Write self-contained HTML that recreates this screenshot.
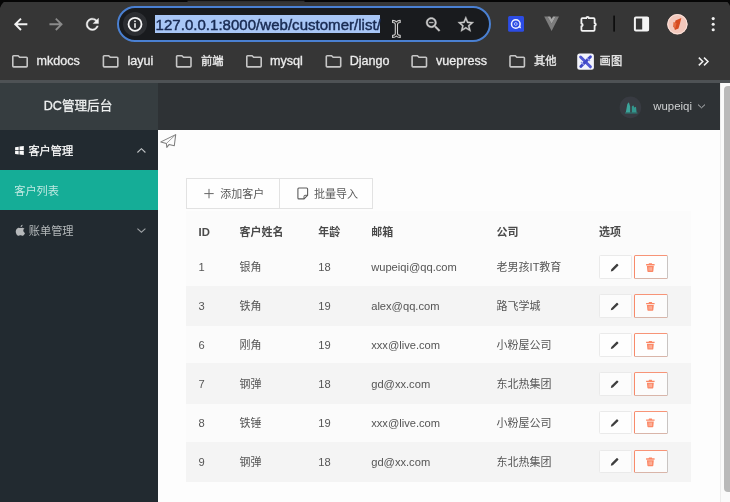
<!DOCTYPE html>
<html lang="zh">
<head>
<meta charset="utf-8">
<title>客户列表</title>
<style>
*{box-sizing:border-box;margin:0;padding:0}
html,body{width:730px;height:502px;overflow:hidden;background:#fdfdfd;}
body{font-family:"Liberation Sans","Noto Sans CJK SC",sans-serif;position:relative;color:#555}
#wrap{position:absolute;left:0;top:0;width:730px;height:502px;will-change:transform}
svg{position:absolute;overflow:visible}
/* browser chrome */
#chrome{position:absolute;left:0;top:0;width:730px;height:82px;background:#363636;z-index:2}
#topstrip{position:absolute;left:0;top:0;width:730px;height:2px;background:#060606}
#omni{position:absolute;left:117px;top:6.300px;width:373.5px;height:36px;border-radius:18px;background:#191b1e;border:2px solid #4a80d2;}
#infobg{position:absolute;left:123px;top:12.3px;width:24px;height:24px;border-radius:50%;background:radial-gradient(circle,#26282b 0,#2d2f33 70%,#27292c 100%)}
#urlsel{position:absolute;left:155px;top:15.3px;width:225.3px;height:18px;background:#a8c6f6;}
#url{position:absolute;left:155.6px;top:14px;font-size:15px;line-height:21px;color:#182a52;letter-spacing:0.03px;white-space:nowrap;-webkit-text-stroke:0.45px #182a52}
.bm{position:absolute;top:52.5px;font-size:12.6px;line-height:17px;color:#ececec;white-space:nowrap;-webkit-text-stroke:0.3px #ececec}
.bm.cj{font-size:11.3px;top:52.5px}
.fd{left:0;top:0}
#chromeline{position:absolute;left:0;top:80.3px;width:730px;height:2.3px;background:#4e5255}
/* page */
#logo{position:absolute;left:0;top:82px;width:158px;height:48px;background:#363d40;color:#eef0f0;font-size:12.6px;line-height:48px;text-align:center;white-space:nowrap;-webkit-text-stroke:0.3px #eef0f0}
#logo span{position:absolute;left:43.7px;top:0.4px}
#header{position:absolute;left:158px;top:82px;width:562.4px;height:48px;background:#2e3235;}
#side{position:absolute;left:0;top:130px;width:158px;height:372px;background:#222a30;}
.nav{position:absolute;left:0;width:158px;height:40px;line-height:40px;font-size:11.2px;color:#b4b8ba;white-space:nowrap}
.nav span{position:absolute;top:0.5px}
#content{position:absolute;left:158px;top:130px;width:562.4px;height:372px;background:#fdfdfd}
#tablebg{position:absolute;left:186px;top:211px;width:505.4px;height:271px;background:#fbfbfb}
#scroll{position:absolute;left:720.4px;top:82px;width:10px;height:420px;background:#fafafa;border-left:1px solid #ececec}
#thumb{position:absolute;left:724.3px;top:85.5px;width:10px;height:406px;border-radius:4px;background:#b9b9b9}
.btn{position:absolute;top:178.3px;height:30.6px;border:1px solid #e2e2e2;background:#fefefe;font-size:11px;line-height:29px;color:#5a5a5a;white-space:nowrap}
.btn span{position:absolute;top:0.4px}
.row{position:absolute;left:186px;width:505.4px;height:38.85px;}
.row span{position:absolute;top:0;line-height:39px;font-size:11px;color:#555;white-space:nowrap}
.row.h span{font-weight:bold;color:#4a4a4a}
.st{position:absolute;left:186px;width:505.4px;height:40.3px;background:#f4f4f4}
.c1{left:12.5px}.c2{left:53.6px}.c3{left:132.3px}.c4{left:185.2px}.c5{left:310.6px}.c6{left:413px}
.row .c4,.row .c3,.row .c1{font-size:11.15px}
.eb,.db{position:absolute;top:7px;height:23.8px;border:1px solid #eaeaea;border-radius:1.5px;background:rgba(255,255,255,.75)}
.eb{left:412.9px;width:33.1px}.db{left:447.8px;width:33.8px;border-color:#f79477 #c9c4c2 #d9b5a9 #f88a6a}
</style>
</head>
<body>
<div id="wrap">
<div id="chrome">
  <div id="topstrip"></div>
  <svg style="left:0;top:0" width="730" height="82" viewBox="0 0 730 82">
    <rect x="187.500" y="0.700" width="117" height="1.500" fill="#2f2f2f"/>
    <path d="M0 0H8Q2 1.5 0 8Z" fill="#060606"/>
    <path d="M730 0H724Q728.500 1.500 730 6Z" fill="#060606"/>
    <!-- back -->
    <path d="M26.400 24.300H15.600M20.300 19.300l-5 5l5 5" fill="none" stroke="#f3f3f3" stroke-width="1.900" stroke-linecap="square" stroke-linejoin="miter"/>
    <!-- forward -->
    <path d="M50.400 24.300H61.200M56.500 19.300l5 5l-5 5" fill="none" stroke="#8b8b8b" stroke-width="1.900" stroke-linecap="square" stroke-linejoin="miter"/>
    <!-- reload -->
    <g transform="translate(83.100 15.100) scale(0.770)" fill="#f3f3f3" stroke="#f3f3f3" stroke-width="0.500"><path d="M17.650 6.350C16.200 4.900 14.210 4 12 4c-4.420 0-7.990 3.580-7.990 8s3.570 8 7.990 8c3.730 0 6.840-2.550 7.730-6h-2.080c-.820 2.330-3.040 4-5.650 4-3.310 0-6-2.690-6-6s2.690-6 6-6c1.660 0 3.140.690 4.220 1.780L13 11h7V4l-2.350 2.350z"/></g>
  </svg>
  <div id="omni"></div>
  <div id="infobg"></div>
  <div id="urlsel"></div>
  <div id="url">127.0.0.1:8000/web/customer/list/</div>
  <svg style="left:0;top:0" width="730" height="82" viewBox="0 0 730 82">
    <!-- info -->
    <circle cx="135" cy="24.300" r="6.500" fill="none" stroke="#f4f4f4" stroke-width="1.800"/>
    <rect x="134.200" y="23.200" width="1.600" height="4.600" fill="#f4f4f4"/>
    <rect x="134.200" y="20.500" width="1.600" height="1.600" fill="#f4f4f4"/>
    <!-- I-beam -->
    <path d="M392.600 20.400q2.700 0 3.800 1.400q1.100-1.400 3.800-1.400v2.100q-2.700 0-2.700 1.900v9q0 1.900 2.700 1.900v2.100q-2.700 0-3.800-1.400q-1.100 1.400-3.800 1.400v-2.100q2.700 0 2.700-1.900v-9q0-1.900-2.700-1.900z" fill="#151515" stroke="#d0d0d0" stroke-width="1.100" stroke-linejoin="round"/>
    <!-- zoom -->
    <g transform="translate(423.700 15) scale(0.800)" fill="#cacaca" stroke="#cacaca" stroke-width="0.450"><path d="M15.500 14h-.790l-.280-.270C15.410 12.590 16 11.110 16 9.500 16 5.910 13.090 3 9.500 3S3 5.910 3 9.500 5.910 16 9.500 16c1.610 0 3.090-.590 4.230-1.570l.270.280v.790l5 4.990L20.490 19l-4.990-5zm-6 0C7.010 14 5 11.990 5 9.500S7.010 5 9.500 5 14 7.010 14 9.500 11.990 14 9.500 14zM7 9h5v1H7z"/></g>
    <!-- star -->
    <g transform="translate(456.200 14.800) scale(0.800)" fill="#cacaca" stroke="#cacaca" stroke-width="0.450"><path d="M22 9.240l-7.190-.620L12 2 9.190 8.630 2 9.240l5.460 4.730L5.820 21 12 17.270 18.180 21l-1.630-7.030L22 9.240zM12 15.400l-3.760 2.270 1-4.280-3.320-2.880 4.380-.380L12 6.100l1.710 4.040 4.380.380-3.320 2.880 1 4.280L12 15.400z"/></g>
    <!-- blue ext -->
    <rect x="508.100" y="16.100" width="15.900" height="15.600" rx="1.500" fill="#2c4ce4"/>
    <circle cx="515.800" cy="24" r="4.300" fill="none" stroke="#f0f3ff" stroke-width="1.500"/>
    <circle cx="515.800" cy="24" r="1.400" fill="none" stroke="#cfd8ff" stroke-width="0.800"/>
    <path d="M518 27l3.200 1.600l-1.200-3.400z" fill="#f0f3ff"/>
    <!-- vue -->
    <path d="M544.200 16.600h3.200l4.200 7.200l4.200-7.200h3.200l-7.400 14.500z" fill="#7d7d7d"/>
    <path d="M547.400 16.600h2.800l1.400 2.500l1.400-2.500h2.800l-4.200 7.200z" fill="#a4a4a4"/>
    <!-- puzzle -->
    <path d="M582.400 18.200H586.300a1.300 1.300 0 0 1 2.600 0H593.600q1 0 1 1V23.200a1.200 1.200 0 0 1 0 2.400V29.800q0 1-1 1H582.400q-1 0-1-1V26.200a1.300 1.300 0 0 0 0-2.600V19.200q0-1 1-1Z" fill="none" stroke="#f3f3f3" stroke-width="1.800" stroke-linejoin="round"/>
    <!-- separator -->
    <rect x="613.300" y="15.600" width="1.600" height="16" fill="#0a0a0a"/>
    <!-- side panel -->
    <rect x="634.900" y="17.600" width="13.200" height="12.800" rx="1" fill="none" stroke="#f4f4f4" stroke-width="2"/>
    <rect x="642.200" y="17.200" width="6.400" height="13.600" fill="#f4f4f4"/>
    <!-- avatar -->
    <circle cx="677.400" cy="24.200" r="10.200" fill="#f3c8bc"/>
    <circle cx="677.400" cy="24.200" r="9.600" fill="none" stroke="#f9e3dc" stroke-width="1"/>
    <path d="M675.500 20.500l5.800-2.500l-1.200 5l-1.600 5.500l-3.600 1.500l-1-3.500z" fill="#d64a1f"/>
    <path d="M673.500 22l3 1l-1 5l-2.500-1z" fill="#e4693f"/>
    <!-- kebab -->
    <circle cx="713.200" cy="18.600" r="1.550" fill="#f1f1f1"/>
    <circle cx="713.200" cy="24.200" r="1.550" fill="#f1f1f1"/>
    <circle cx="713.200" cy="29.800" r="1.550" fill="#f1f1f1"/>
    <!-- folders -->
    <g fill="#c6c6c6">
      <g transform="translate(10.400 51.700) scale(0.800)"><path d="M9.170 6l2 2H20v10H4V6h5.170M10 4H4c-1.100 0-1.990.900-1.990 2L2 18c0 1.100.900 2 2 2h16c1.100 0 2-.900 2-2V8c0-1.100-.900-2-2-2h-8l-2-2z"/></g>
      <g transform="translate(101 51.700) scale(0.800)"><path d="M9.170 6l2 2H20v10H4V6h5.170M10 4H4c-1.100 0-1.990.900-1.990 2L2 18c0 1.100.900 2 2 2h16c1.100 0 2-.900 2-2V8c0-1.100-.900-2-2-2h-8l-2-2z"/></g>
      <g transform="translate(174.200 51.700) scale(0.800)"><path d="M9.170 6l2 2H20v10H4V6h5.170M10 4H4c-1.100 0-1.990.900-1.990 2L2 18c0 1.100.900 2 2 2h16c1.100 0 2-.900 2-2V8c0-1.100-.900-2-2-2h-8l-2-2z"/></g>
      <g transform="translate(244.400 51.700) scale(0.800)"><path d="M9.170 6l2 2H20v10H4V6h5.170M10 4H4c-1.100 0-1.990.900-1.990 2L2 18c0 1.100.900 2 2 2h16c1.100 0 2-.900 2-2V8c0-1.100-.900-2-2-2h-8l-2-2z"/></g>
      <g transform="translate(323.900 51.700) scale(0.800)"><path d="M9.170 6l2 2H20v10H4V6h5.170M10 4H4c-1.100 0-1.990.900-1.990 2L2 18c0 1.100.900 2 2 2h16c1.100 0 2-.900 2-2V8c0-1.100-.900-2-2-2h-8l-2-2z"/></g>
      <g transform="translate(409.700 51.700) scale(0.800)"><path d="M9.170 6l2 2H20v10H4V6h5.170M10 4H4c-1.100 0-1.990.900-1.990 2L2 18c0 1.100.900 2 2 2h16c1.100 0 2-.900 2-2V8c0-1.100-.900-2-2-2h-8l-2-2z"/></g>
      <g transform="translate(507.600 51.700) scale(0.800)"><path d="M9.170 6l2 2H20v10H4V6h5.170M10 4H4c-1.100 0-1.990.900-1.990 2L2 18c0 1.100.900 2 2 2h16c1.100 0 2-.900 2-2V8c0-1.100-.900-2-2-2h-8l-2-2z"/></g>
    </g>
    <!-- draw icon -->
    <rect x="577.200" y="53.400" width="16.700" height="16.400" rx="2.500" fill="#f3f4fb"/>
    <path d="M580.600 57l9.800 9.800" stroke="#5158d4" stroke-width="3" stroke-linecap="round"/>
    <path d="M590.500 56.800l-9.700 9.800" stroke="#4048c6" stroke-width="2.800" stroke-linecap="round"/>
    <path d="M581 62l3 3M587 58l3 3" stroke="#8d95ea" stroke-width="1.200"/>
    <!-- more -->
    <path d="M698.800 57.600l4 3.900l-4 3.900M704 57.600l4 3.900l-4 3.900" fill="none" stroke="#f1f1f1" stroke-width="1.500"/>
  </svg>
  <div class="bm" style="left:36.400px">mkdocs</div>
  <div class="bm" style="left:127.400px">layui</div>
  <div class="bm cj" style="left:201px">前端</div>
  <div class="bm" style="left:270px">mysql</div>
  <div class="bm" style="left:349.700px">Django</div>
  <div class="bm" style="left:436px">vuepress</div>
  <div class="bm cj" style="left:534px">其他</div>
  <div class="bm cj" style="left:599.600px">画图</div>
  <div id="chromeline"></div>
</div>
<div id="logo"><span>DC管理后台</span></div>
<div id="header">
  <svg style="left:0;top:0" width="562" height="48" viewBox="158 82 562 48">
    <circle cx="630.400" cy="107.400" r="10.800" fill="#383b42"/>
    <path d="M625.800 112.400l1.600-8.500l1.500-1.600l1.300 4.500v5.600z" fill="#3ca59c"/>
    <path d="M631.800 112.400v-6l1.500-1.200l1 2.400l1.700-.800l.6 5.600z" fill="#33978e"/>
    <path d="M625 113h12.500" stroke="#2c8f86" stroke-width="0.800"/>
    <path d="M698 104.600l3.500 3.200l3.500-3.200" fill="none" stroke="#b9bcbe" stroke-width="1"/>
  </svg>
  <span style="position:absolute;left:495.300px;top:-0.200px;line-height:48px;font-size:11.4px;color:#cfd1d2;white-space:nowrap">wupeiqi</span>
</div>
<div id="side">
  <div class="nav" style="top:0;color:#fbfbfb;-webkit-text-stroke:0.25px #fbfbfb"><span style="left:28.400px">客户管理</span></div>
  <div class="nav" style="top:39.800px;height:40.200px;background:#15ad97;color:#bfe9e2"><span style="left:14.200px;top:1.200px">客户列表</span></div>
  <div class="nav" style="top:80px"><span style="left:28.800px">账单管理</span></div>
  <svg style="left:0;top:0" width="158" height="372" viewBox="0 130 158 372">
    <!-- windows -->
    <path d="M15.100 147.200l3.600-.500v3.500h-3.600zM19.500 146.600l4.300-.600v4.200h-4.300zM15.100 150.900h3.600v3.500l-3.600-.500zM19.500 150.900h4.300v4.200l-4.300-.600z" fill="#fbfbfb"/>
    <!-- apple -->
    <path d="M20.600 227.300c.9-.1 1.900-1 2-2.500c-1.100.1-2.100 1.100-2 2.500zM23 228c-1-.4-1.800.1-2.500.1c-.7 0-1.500-.6-2.600-.2c-1.600.600-2.400 2.400-2.100 4.300c.3 1.700 1.400 3.500 2.600 3.500c.8 0 1.200-.5 2.100-.5c.9 0 1.200.5 2.100.5c1.100 0 2-1.500 2.400-2.700c-1.200-.500-1.700-1.500-1.700-2.400c0-.900.500-1.700 1.300-2.100c-.4-.3-.9-.4-1.600-.500z" fill="#b6b9bb"/>
    <!-- chevrons -->
    <path d="M137.400 152.500l4-3.800l4 3.800" fill="none" stroke="#c3c6c8" stroke-width="1.100"/>
    <path d="M137.400 228.600l4 3.600l4-3.600" fill="none" stroke="#9da1a4" stroke-width="1.100"/>
  </svg>
</div>
<div id="content"></div>
<div id="tablebg"></div>
<div id="scroll"></div>
<div id="thumb"></div>
<svg style="left:158px;top:130px" width="30" height="24" viewBox="158 130 30 24">
  <path d="M175.700 134.600L160.900 141.900L166.400 143.500L166.800 147.400L169 144.600L174.300 145.700Z" fill="none" stroke="#7d7d7d" stroke-width="1.050" stroke-linejoin="round"/>
  <path d="M175.700 134.600L166.400 143.500" fill="none" stroke="#8e8e8e" stroke-width="0.800"/>
</svg>
<div class="btn" style="left:186.200px;width:93.600px"><span style="left:33px">添加客户</span></div>
<div class="btn" style="left:278.800px;width:94.400px"><span style="left:34.200px">批量导入</span></div>
<svg style="left:186px;top:178px" width="190" height="32" viewBox="186 178 190 32">
  <path d="M204.300 193.600h9.400M209 188.900v9.400" stroke="#666" stroke-width="1" fill="none"/>
  <path d="M298.900 188h7.700q1 0 1 1v6.300l-3.600 3.600h-5.100q-1 0-1-1v-8.900q0-1 1-1z" fill="none" stroke="#5c5c5c" stroke-width="1.100"/>
  <path d="M307.600 195.300h-2.600q-1 0-1 1v2.600" fill="none" stroke="#5c5c5c" stroke-width="1"/>
</svg>

<div class="st" style="top:285.500px"></div><div class="st" style="top:363.400px"></div><div class="st" style="top:441.500px"></div>
<div class="row h" style="top:213px"><span class="c1" style="font-size:11.3px">ID</span><span class="c2">客户姓名</span><span class="c3" style="font-size:11px">年龄</span><span class="c4" style="font-size:11px">邮箱</span><span class="c5">公司</span><span class="c6">选项</span></div>
<div class="row" style="top:248.30px"><span class="c1">1</span><span class="c2">银角</span><span class="c3">18</span><span class="c4">wupeiqi@qq.com</span><span class="c5">老男孩IT教育</span><div class="eb"></div><div class="db"></div></div>
<div class="row" style="top:287.15px"><span class="c1">3</span><span class="c2">铁角</span><span class="c3">19</span><span class="c4">alex@qq.com</span><span class="c5">路飞学城</span><div class="eb"></div><div class="db"></div></div>
<div class="row" style="top:326.00px"><span class="c1">6</span><span class="c2">刚角</span><span class="c3">19</span><span class="c4">xxx@live.com</span><span class="c5">小粉屋公司</span><div class="eb"></div><div class="db"></div></div>
<div class="row" style="top:364.85px"><span class="c1">7</span><span class="c2">钢弹</span><span class="c3">18</span><span class="c4">gd@xx.com</span><span class="c5">东北热集团</span><div class="eb"></div><div class="db"></div></div>
<div class="row" style="top:403.70px"><span class="c1">8</span><span class="c2">铁锤</span><span class="c3">19</span><span class="c4">xxx@live.com</span><span class="c5">小粉屋公司</span><div class="eb"></div><div class="db"></div></div>
<div class="row" style="top:442.55px"><span class="c1">9</span><span class="c2">钢弹</span><span class="c3">18</span><span class="c4">gd@xx.com</span><span class="c5">东北热集团</span><div class="eb"></div><div class="db"></div></div>
<svg style="left:0;top:0" width="730" height="502" viewBox="0 0 730 502">
  <g transform="translate(610.600 263.30)"><path d="M0.200 8.100l.500-2.100L5.900.800q.500-.500 1-.0l.700.700q.500.500 0 1L2.300 7.600z" fill="#3e3e3e"/></g>
  <g transform="translate(646.100 263.20)" fill="#fb8765"><path d="M2.900 0h2.800l.400.900h2.400v1.300H0V.900h2.500z"/><path d="M.800 2.900h6.900l-.500 5.100q-.1.700-.800.700H2.100q-.7 0-.8-.7z"/><path d="M3 4v3.500M4.250 4v3.500M5.500 4v3.500" stroke="#fdd5c8" stroke-width="0.600" fill="none"/></g>
  <g transform="translate(610.600 302.15)"><path d="M0.200 8.100l.500-2.100L5.900.800q.500-.500 1-.0l.700.700q.500.500 0 1L2.300 7.600z" fill="#3e3e3e"/></g>
  <g transform="translate(646.100 302.05)" fill="#fb8765"><path d="M2.900 0h2.800l.400.900h2.400v1.300H0V.900h2.500z"/><path d="M.800 2.900h6.900l-.500 5.100q-.1.700-.800.700H2.100q-.7 0-.8-.7z"/><path d="M3 4v3.500M4.250 4v3.500M5.500 4v3.500" stroke="#fdd5c8" stroke-width="0.600" fill="none"/></g>
  <g transform="translate(610.600 341.00)"><path d="M0.200 8.100l.500-2.100L5.900.800q.500-.500 1-.0l.700.700q.500.500 0 1L2.300 7.600z" fill="#3e3e3e"/></g>
  <g transform="translate(646.100 340.90)" fill="#fb8765"><path d="M2.900 0h2.800l.400.900h2.400v1.300H0V.900h2.500z"/><path d="M.800 2.900h6.900l-.500 5.100q-.1.700-.800.700H2.100q-.7 0-.8-.7z"/><path d="M3 4v3.500M4.250 4v3.500M5.500 4v3.500" stroke="#fdd5c8" stroke-width="0.600" fill="none"/></g>
  <g transform="translate(610.600 379.85)"><path d="M0.200 8.100l.500-2.100L5.900.800q.500-.500 1-.0l.700.700q.500.500 0 1L2.300 7.600z" fill="#3e3e3e"/></g>
  <g transform="translate(646.100 379.75)" fill="#fb8765"><path d="M2.900 0h2.800l.400.900h2.400v1.300H0V.900h2.500z"/><path d="M.800 2.900h6.900l-.500 5.100q-.1.700-.800.700H2.100q-.7 0-.8-.7z"/><path d="M3 4v3.500M4.250 4v3.500M5.500 4v3.500" stroke="#fdd5c8" stroke-width="0.600" fill="none"/></g>
  <g transform="translate(610.600 418.70)"><path d="M0.200 8.100l.500-2.100L5.900.800q.500-.500 1-.0l.700.700q.500.500 0 1L2.300 7.600z" fill="#3e3e3e"/></g>
  <g transform="translate(646.100 418.60)" fill="#fb8765"><path d="M2.900 0h2.800l.400.900h2.400v1.300H0V.900h2.500z"/><path d="M.800 2.900h6.900l-.500 5.100q-.1.700-.800.700H2.100q-.7 0-.8-.7z"/><path d="M3 4v3.500M4.250 4v3.500M5.500 4v3.500" stroke="#fdd5c8" stroke-width="0.600" fill="none"/></g>
  <g transform="translate(610.600 457.55)"><path d="M0.200 8.100l.500-2.100L5.900.800q.500-.500 1-.0l.700.700q.500.500 0 1L2.300 7.600z" fill="#3e3e3e"/></g>
  <g transform="translate(646.100 457.45)" fill="#fb8765"><path d="M2.900 0h2.800l.400.900h2.400v1.300H0V.900h2.500z"/><path d="M.800 2.900h6.900l-.500 5.100q-.1.700-.800.700H2.100q-.7 0-.8-.7z"/><path d="M3 4v3.500M4.250 4v3.500M5.500 4v3.500" stroke="#fdd5c8" stroke-width="0.600" fill="none"/></g>
</svg>
</div>
</body>
</html>
